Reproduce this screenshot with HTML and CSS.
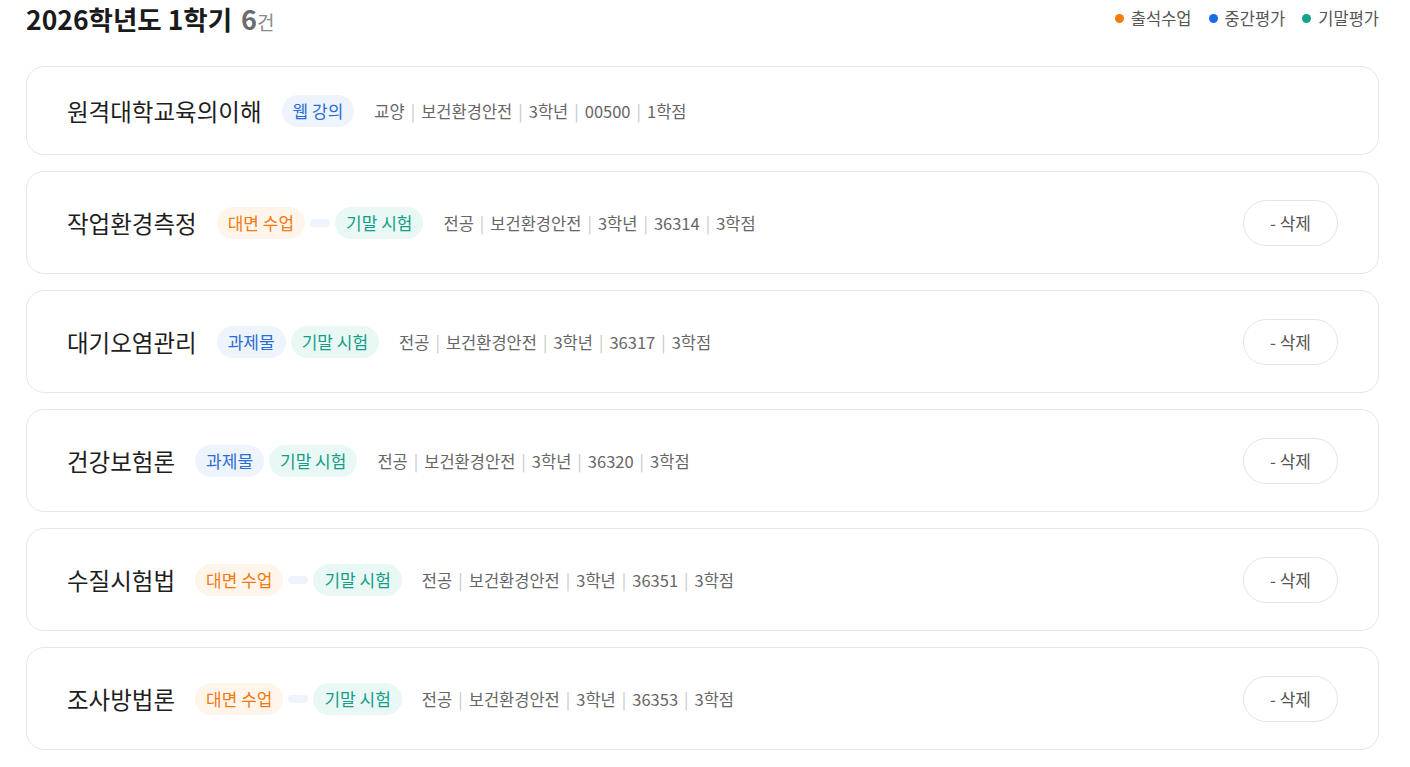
FILE: index.html
```html
<!DOCTYPE html>
<html>
<head>
    <title>수강 과목</title>
    <link rel="stylesheet" href="styles.css">
</head>
<body>
    <div class="course-page">
        <div class="page-head">
            <h2 class="term-title">2026학년도 1학기 <span class="count">6<small>건</small></span></h2>
            <ul class="legend">
                <li><span class="dot dot-orange"></span>출석수업</li>
                <li><span class="dot dot-blue"></span>중간평가</li>
                <li><span class="dot dot-teal"></span>기말평가</li>
            </ul>
        </div>

        <div class="course-list">
            <div class="course-card">
                <span class="course-name">원격대학교육의이해</span>
                <div class="tags">
                    <span class="tag tag-blue">웹 강의</span>
                </div>
                <div class="meta">교양<i>|</i>보건환경안전<i>|</i>3학년<i>|</i>00500<i>|</i>1학점</div>
            </div>

            <div class="course-card">
                <span class="course-name">작업환경측정</span>
                <div class="tags">
                    <span class="tag tag-orange">대면 수업</span>
                    <span class="tag tag-blue"></span>
                    <span class="tag tag-teal">기말 시험</span>
                </div>
                <div class="meta">전공<i>|</i>보건환경안전<i>|</i>3학년<i>|</i>36314<i>|</i>3학점</div>
                <button class="remove-btn">- 삭제</button>
            </div>

            <div class="course-card">
                <span class="course-name">대기오염관리</span>
                <div class="tags">
                    <span class="tag tag-blue">과제물</span>
                    <span class="tag tag-teal">기말 시험</span>
                </div>
                <div class="meta">전공<i>|</i>보건환경안전<i>|</i>3학년<i>|</i>36317<i>|</i>3학점</div>
                <button class="remove-btn">- 삭제</button>
            </div>

            <div class="course-card">
                <span class="course-name">건강보험론</span>
                <div class="tags">
                    <span class="tag tag-blue">과제물</span>
                    <span class="tag tag-teal">기말 시험</span>
                </div>
                <div class="meta">전공<i>|</i>보건환경안전<i>|</i>3학년<i>|</i>36320<i>|</i>3학점</div>
                <button class="remove-btn">- 삭제</button>
            </div>

            <div class="course-card">
                <span class="course-name">수질시험법</span>
                <div class="tags">
                    <span class="tag tag-orange">대면 수업</span>
                    <span class="tag tag-blue"></span>
                    <span class="tag tag-teal">기말 시험</span>
                </div>
                <div class="meta">전공<i>|</i>보건환경안전<i>|</i>3학년<i>|</i>36351<i>|</i>3학점</div>
                <button class="remove-btn">- 삭제</button>
            </div>

            <div class="course-card">
                <span class="course-name">조사방법론</span>
                <div class="tags">
                    <span class="tag tag-orange">대면 수업</span>
                    <span class="tag tag-blue"></span>
                    <span class="tag tag-teal">기말 시험</span>
                </div>
                <div class="meta">전공<i>|</i>보건환경안전<i>|</i>3학년<i>|</i>36353<i>|</i>3학점</div>
                <button class="remove-btn">- 삭제</button>
            </div>
        </div>
    </div>
</body>
</html>
```

FILE: styles.css
```css
body {
    margin: 0;
    padding: 0;
    background-color: #ffffff;
    font-family: "Noto Sans CJK KR", "Noto Sans", sans-serif;
    color: #222;
}
.course-page {
    padding: 0 31px 0 26px;
}
.page-head {
    display: flex;
    justify-content: space-between;
    align-items: center;
    height: 36px;
    margin-bottom: 30px;
}
.term-title {
    margin: 0;
    font-size: 26.5px;
    font-weight: 600;
    color: #1a1a1a;
}
.term-title .count {
    color: #6b6b6b;
    font-size: 27px;
    margin-left: 3px;
}
.term-title small {
    font-size: 19px;
    font-weight: 400;
    color: #8a8a8a;
}
.legend {
    list-style: none;
    margin: 0;
    padding: 0;
    display: flex;
    gap: 17px;
    font-size: 16.5px;
    color: #555;
}
.legend li {
    display: flex;
    align-items: center;
    gap: 7px;
}
.dot {
    width: 9px;
    height: 9px;
    border-radius: 50%;
}
.dot-orange { background-color: #f57c0a; }
.dot-blue { background-color: #1a6be6; }
.dot-teal { background-color: #12a28d; }

.course-list {
    display: flex;
    flex-direction: column;
    gap: 16px;
}
.course-card {
    display: flex;
    align-items: center;
    gap: 20px;
    padding: 27.5px 40px;
    border: 1px solid #e6e6e6;
    border-radius: 18px;
    background-color: #ffffff;
}
.course-name {
    font-size: 23.5px;
    font-weight: 400;
    color: #1e1e1e;
    line-height: 32px;
}
.tags {
    display: flex;
    align-items: center;
    gap: 5px;
}
.tag {
    padding: 4px 11px;
    border-radius: 16px;
    font-size: 17px;
    line-height: 24px;
}
.tag:empty {
    padding: 4px 10px;
    line-height: 0;
}
.tag-blue {
    background-color: #eef4fc;
    color: #2a6cd6;
}
.tag-orange {
    background-color: #fff5eb;
    color: #f27a12;
}
.tag-teal {
    background-color: #eaf8f5;
    color: #139d88;
}
.meta {
    font-size: 16.5px;
    color: #666;
}
.meta i {
    font-style: normal;
    color: #c8c8c8;
    margin: 0 6px;
}
.remove-btn {
    margin-left: auto;
    width: 95px;
    height: 46px;
    border: 1px solid #e4e4e4;
    border-radius: 23px;
    background-color: #ffffff;
    font-family: inherit;
    font-size: 17px;
    color: #555;
    cursor: pointer;
}
```
